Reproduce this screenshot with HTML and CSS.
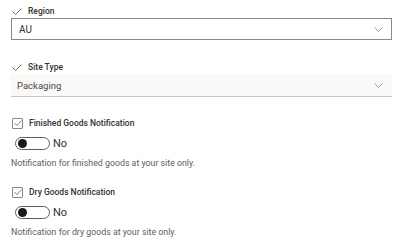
FILE: index.html
```html
<!DOCTYPE html>
<html lang="en">
<head>
  <meta charset="UTF-8" />
  <meta name="viewport" content="width=device-width, initial-scale=1" />
  <title>Site Settings</title>
  <link rel="stylesheet" href="styles.css">
</head>
<body>
  <form class="settings">
    <div class="field region">
      <div class="label">
        <svg class="tick" viewBox="0 0 10 7" width="10" height="7"><path d="M0.5 3.5 L3.5 6.5 L9.5 0.5" fill="none" stroke="#605e5c" stroke-width="0.9"/></svg>
        <span>Region</span>
      </div>
      <div class="dropdown boxed">
        <span>AU</span>
        <svg class="chevron" viewBox="0 0 9 5" width="9" height="5"><path d="M0.5 0.5 L4.5 4.5 L8.5 0.5" fill="none" stroke="#8a8886" stroke-width="0.8"/></svg>
      </div>
    </div>

    <div class="field sitetype">
      <div class="label">
        <svg class="tick" viewBox="0 0 10 7" width="10" height="7"><path d="M0.5 3.5 L3.5 6.5 L9.5 0.5" fill="none" stroke="#605e5c" stroke-width="0.9"/></svg>
        <span>Site Type</span>
      </div>
      <div class="dropdown filled">
        <span>Packaging</span>
        <svg class="chevron" viewBox="0 0 9 5" width="9" height="5"><path d="M0.5 0.5 L4.5 4.5 L8.5 0.5" fill="none" stroke="#8a8886" stroke-width="0.8"/></svg>
      </div>
    </div>

    <div class="field notify first">
      <div class="label">
        <span class="box"><svg viewBox="0 0 8 6" width="8" height="6"><path d="M0.5 3 L3 5.5 L7.5 0.5" fill="none" stroke="#605e5c" stroke-width="0.8"/></svg></span>
        <span>Finished Goods Notification</span>
      </div>
      <div class="toggle-row">
        <span class="toggle"><span class="knob"></span></span>
        <span>No</span>
      </div>
      <p class="hint">Notification for finished goods at your site only.</p>
    </div>

    <div class="field notify">
      <div class="label">
        <span class="box"><svg viewBox="0 0 8 6" width="8" height="6"><path d="M0.5 3 L3 5.5 L7.5 0.5" fill="none" stroke="#605e5c" stroke-width="0.8"/></svg></span>
        <span>Dry Goods Notification</span>
      </div>
      <div class="toggle-row">
        <span class="toggle"><span class="knob"></span></span>
        <span>No</span>
      </div>
      <p class="hint">Notification for dry goods at your site only.</p>
    </div>
  </form>
</body>
</html>
```

FILE: styles.css
```css
body {
  margin: 0;
  font-family: 'Segoe UI', Roboto, sans-serif;
  background: #fff;
  color: #323130;
}

.settings {
  padding: 4px 8px 0 11px;
  width: 381px;
}

.field {
  display: flex;
  flex-direction: column;
}

.label {
  display: flex;
  align-items: center;
  gap: 6px;
  height: 14px;
  font-size: 8.5px;
  font-weight: 500;
  padding-left: 1px;
}

.tick {
  display: block;
}

.dropdown {
  display: flex;
  align-items: center;
  justify-content: space-between;
  box-sizing: border-box;
  font-size: 10px;
  padding: 0 8px 0 7px;
}

.dropdown.boxed {
  height: 22px;
  border: 1px solid #8a8886;
}

.dropdown.filled {
  height: 23px;
  background: #faf9f8;
  border-bottom: 1px solid #c8c6c4;
  padding-left: 6px;
  padding-right: 9px;
  font-size: 9.5px;
  color: #484644;
}

.sitetype {
  margin-top: 20px;
}

.notify {
  margin-top: 19px;
}

.notify + .notify {
  margin-top: 16px;
}

.box {
  display: flex;
  align-items: center;
  justify-content: center;
  width: 9px;
  height: 9px;
  border: 1px solid #8a8886;
  border-radius: 1px;
}

.box svg {
  display: block;
}

.toggle-row {
  display: flex;
  align-items: center;
  gap: 3px;
  height: 14px;
  margin-top: 6px;
  padding-left: 4px;
  font-size: 11px;
}

.toggle {
  display: flex;
  align-items: center;
  box-sizing: border-box;
  width: 35px;
  height: 13px;
  border: 1px solid #605e5c;
  border-radius: 7px;
  padding-left: 2px;
}

.knob {
  width: 9px;
  height: 9px;
  border-radius: 50%;
  background: #1b1a19;
}

.hint {
  margin: 7px 0 0;
  height: 12px;
  line-height: 12px;
  font-size: 8.8px;
  color: #605e5c;
}
```
